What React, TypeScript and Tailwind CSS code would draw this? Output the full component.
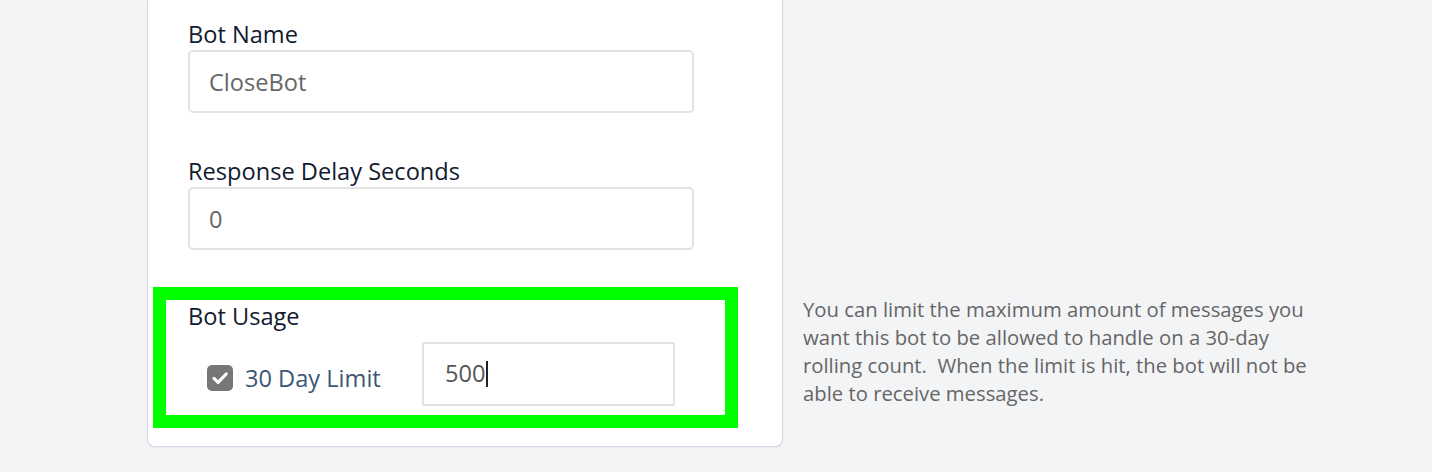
import React from "react";

const font = { fontFamily: '"Open Sans", "Noto Sans", sans-serif' };

const Field = ({ label, value, className = "" }: { label: string; value: string; className?: string }) => (
  <div className={className}>
    <div className="text-[23.6px] leading-[32px] text-[#121b2f]">{label}</div>
    <input
      readOnly
      defaultValue={value}
      className="block w-[506px] h-[63px] border-2 border-[#e2e2e2] rounded-[5px] pl-[19px] text-[23.6px] text-[#666] bg-white outline-none"
    />
  </div>
);

export default function App() {
  return (
    <div className="min-h-screen bg-[#f3f4f6] flex items-start" style={font}>
      {/* Settings card */}
      <div className="ml-[147px] w-[636px] bg-white border border-t-0 border-[#d3d9e6] rounded-b-[8px] px-[40px] pt-[18px] pb-[18px] shadow-[0_1px_2px_rgba(0,0,0,0.05)]">
        <Field label="Bot Name" value="CloseBot" />
        <Field label="Response Delay Seconds" value="0" className="mt-[42px]" />

        {/* Highlighted usage section */}
        <div className="mt-[37px] -ml-[35px] w-[585px] border-[13px] border-[#00ff00] pl-[22px] pb-[9px]">
          <div className="text-[23.6px] leading-[32px] text-[#121b2f]">Bot Usage</div>
          <div className="mt-[10px] flex items-start">
            <label className="w-[234px] mt-[23px] pl-[19px] flex items-center gap-[12px]">
              <span className="w-[26px] h-[26px] rounded-[5px] bg-[#777] flex items-center justify-center">
                <svg width="22" height="22" viewBox="0 0 22 22" fill="none">
                  <path d="M5 11.4l4.1 4L17.2 7" stroke="#fff" strokeWidth="3.2" strokeLinecap="round" strokeLinejoin="round" />
                </svg>
              </span>
              <span className="text-[23.6px] leading-[26px] text-[#3d5676]">30 Day Limit</span>
            </label>
            <div className="w-[253px] h-[64px] border-2 border-[#e2e2e2] rounded-[2px] pl-[21px] flex items-center text-[23.6px] text-[#555]">
              500
              <span className="w-[2px] h-[26px] bg-[#222] ml-[1px]" />
            </div>
          </div>
        </div>
      </div>

      {/* Help text */}
      <div className="ml-[20px] pt-[295px] w-[540px] text-[20.3px] leading-[28px] text-[#666]">
        You can limit the maximum amount of messages you
        <br />
        want this bot to be allowed to handle on a 30-day
        <br />
        rolling count.&nbsp; When the limit is hit, the bot will not be
        <br />
        able to receive messages.
      </div>
    </div>
  );
}
